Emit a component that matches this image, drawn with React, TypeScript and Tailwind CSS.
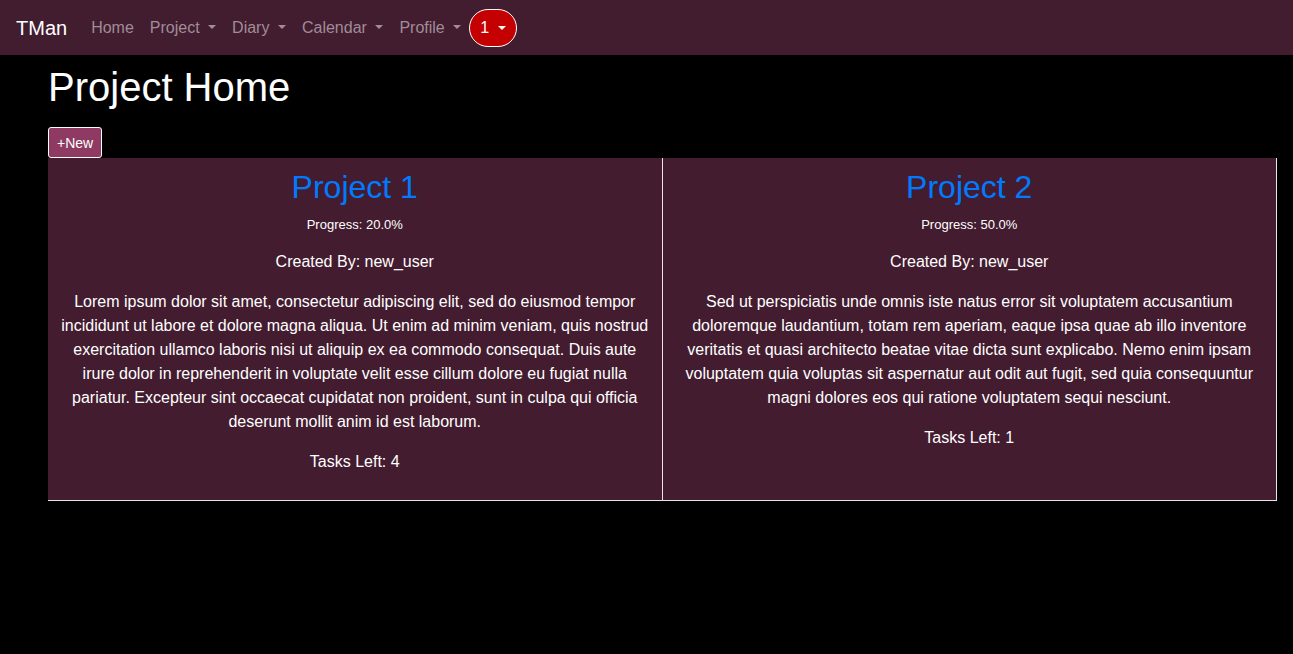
const NAV = ["Project", "Diary", "Calendar", "Profile"];

const PROJECTS = [
  {
    name: "Project 1",
    progress: "20.0%",
    user: "new_user",
    tasks: 4,
    text:
      "Lorem ipsum dolor sit amet, consectetur adipiscing elit, sed do eiusmod tempor incididunt ut labore et dolore magna aliqua. Ut enim ad minim veniam, quis nostrud exercitation ullamco laboris nisi ut aliquip ex ea commodo consequat. Duis aute irure dolor in reprehenderit in voluptate velit esse cillum dolore eu fugiat nulla pariatur. Excepteur sint occaecat cupidatat non proident, sunt in culpa qui officia deserunt mollit anim id est laborum.",
  },
  {
    name: "Project 2",
    progress: "50.0%",
    user: "new_user",
    tasks: 1,
    text:
      "Sed ut perspiciatis unde omnis iste natus error sit voluptatem accusantium doloremque laudantium, totam rem aperiam, eaque ipsa quae ab illo inventore veritatis et quasi architecto beatae vitae dicta sunt explicabo. Nemo enim ipsam voluptatem quia voluptas sit aspernatur aut odit aut fugit, sed quia consequuntur magni dolores eos qui ratione voluptatem sequi nesciunt.",
  },
];

function Caret() {
  return (
    <span className="inline-block w-0 h-0 ml-[8.5px] align-[0.255em] border-t-[0.3em] border-t-current border-x-[0.3em] border-x-transparent border-b-0" />
  );
}

export default function App() {
  return (
    <div className="min-h-[654px] bg-black text-white font-['Liberation_Sans',Arial,sans-serif]">
      {/* navbar */}
      <nav className="h-[55px] bg-[#421c2f] flex items-center px-4 pt-[1px]">
        <span className="text-[20px] leading-[30px] mr-4 text-white">TMan</span>
        <span className="px-2 leading-6 text-[#a08d97]">Home</span>
        {NAV.map((n) => (
          <span key={n} className="px-2 leading-6 text-[#a08d97]">
            {n}
            <Caret />
          </span>
        ))}
        <span className="h-[38px] px-[10px] rounded-full border border-white bg-[#c40000] text-white leading-6 flex items-center">
          1
          <Caret />
        </span>
      </nav>

      <main className="ml-12 mr-4">
        <h1 className="text-[40px] leading-[48px] mt-[8px] mb-[16px]">Project Home</h1>
        <button className="h-[31px] px-2 pt-[1px] text-[14px] leading-[21px] rounded-[3px] border border-white bg-[#8e3a62] text-white">
          +New
        </button>

        <div className="grid grid-cols-2">
          {PROJECTS.map((p) => (
            <div
              key={p.name}
              className="bg-[#431c2f] border-r border-b border-[#e6e6e6] text-center pt-[10px] pb-[10px] px-3"
            >
              <h2 className="text-[32px] leading-[38.4px] mb-[9px] text-[#007bff]">{p.name}</h2>
              <p className="text-[13px] leading-[19.5px] mb-[15px]">Progress: {p.progress}</p>
              <p className="leading-6 mb-4">Created By: {p.user}</p>
              <p className="leading-6 mb-4">{p.text}</p>
              <p className="leading-6 mb-4">Tasks Left: {p.tasks}</p>
            </div>
          ))}
        </div>
      </main>
    </div>
  );
}
